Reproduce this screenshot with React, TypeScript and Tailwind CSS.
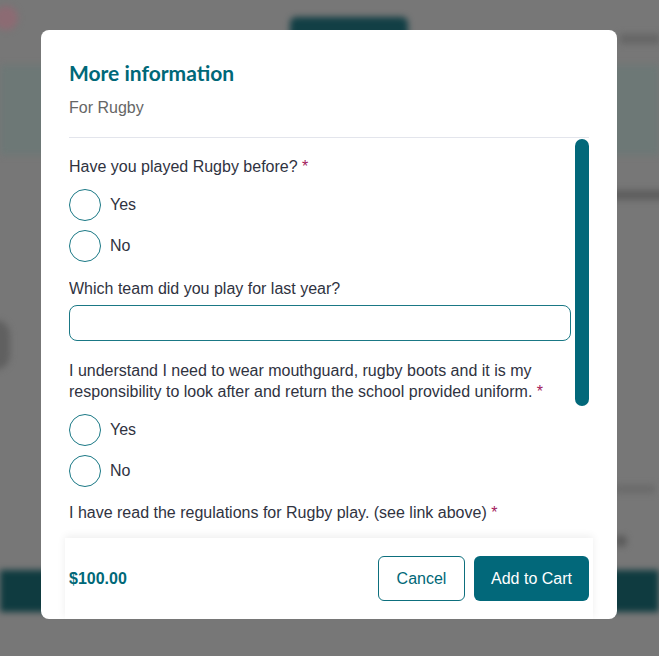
import React from "react";

function Radio({ label }: { label: string }) {
  return (
    <label className="flex items-center gap-[9px] h-8">
      <span className="block w-8 h-8 rounded-full border-[1.5px] border-[#1a7885] bg-white" />
      <span className="text-base text-[#30333f]">{label}</span>
    </label>
  );
}

function Question({ children, required }: { children: React.ReactNode; required?: boolean }) {
  return (
    <p className="text-base leading-6 text-[#30333f]">
      {children}
      {required && <span className="text-[#a3195b]"> *</span>}
    </p>
  );
}

export default function App() {
  return (
    <div
      className="relative w-[659px] h-[656px] overflow-hidden bg-[#777777]"
      style={{ fontFamily: '"Liberation Sans", Arial, sans-serif' }}
    >
      {/* dimmed, blurred page behind the modal */}
      <div className="absolute inset-0 blur-[3px]">
        <div className="relative h-[65px]">
          <div className="absolute left-[-6px] top-[6px] w-[24px] h-[24px] rounded-full bg-[#8c6b73]" />
          <div className="absolute left-[290px] top-[17px] w-[118px] h-[34px] rounded-md bg-[#123f45]" />
          <div className="absolute left-[620px] top-[34px] w-[40px] h-[10px] bg-[#666]" />
        </div>
        <div className="h-[90px] bg-[#6d7876]" />
        <div className="relative h-[415px]">
          <div className="absolute left-[610px] top-[35px] w-[60px] h-[10px] bg-[#5e5e5e]" />
          <div className="absolute left-[-20px] top-[165px] w-[30px] h-[50px] rounded-full bg-[#606060]" />
          <div className="absolute left-[615px] top-[330px] w-[40px] h-[8px] bg-[#6a6a6a]" />
          <div className="absolute left-[615px] top-[380px] w-[12px] h-[12px] rounded-full bg-[#5a5a5a]" />
        </div>
        <div className="h-[42px] bg-[#0f3b40]" />
      </div>

      {/* modal */}
      <div className="absolute left-[41px] top-[30px] w-[576px] h-[589px] rounded-lg bg-white flex flex-col px-7 overflow-hidden">
        <div className="pt-[29px] pb-[17px] border-b border-[#e3e5ec]">
          <h2
            className="text-[21px] leading-7 font-bold text-[#006878]"
            style={{ fontFamily: 'Lato, "Open Sans", sans-serif' }}
          >
            More information
          </h2>
          <p className="mt-[9px] text-base leading-6 text-[#666666]">For Rugby</p>
        </div>

        <div className="relative h-[400px] overflow-hidden">
          <div className="pt-[17px] pr-[18px] flex flex-col">
            <Question required>Have you played Rugby before?</Question>
            <div className="mt-[10px] flex flex-col gap-[9px]">
              <Radio label="Yes" />
              <Radio label="No" />
            </div>
            <div className="mt-[15px]">
              <Question>Which team did you play for last year?</Question>
            </div>
            <input
              type="text"
              className="mt-[4px] h-9 w-full rounded-lg border border-[#1a7885] px-3 outline-none"
            />
            <p className="mt-[19px] text-base leading-[21px] text-[#30333f]">
              I understand I need to wear mouthguard, rugby boots and it is my responsibility to look after and return the school provided uniform.
              <span className="text-[#a3195b]"> *</span>
            </p>
            <div className="mt-[12px] flex flex-col gap-[9px]">
              <Radio label="Yes" />
              <Radio label="No" />
            </div>
            <div className="mt-[14px]">
              <Question required>I have read the regulations for Rugby play. (see link above)</Question>
            </div>
          </div>
          <div className="absolute right-0 top-[1px] w-[14px] h-[267px] rounded-full bg-[#02687a]" />
        </div>

        <div className="relative -mx-1 px-1 h-[81px] flex items-center justify-between bg-white shadow-[0_-2px_8px_rgba(0,0,0,0.07)]">
          <span className="text-base font-bold text-[#006878]">$100.00</span>
          <div className="flex gap-[9px]">
            <button className="h-[45px] w-[87px] rounded-md border border-[#0d6f7d] bg-white text-base text-[#006878]">
              Cancel
            </button>
            <button className="h-[45px] w-[115px] rounded-md bg-[#02687a] text-base text-white">
              Add to Cart
            </button>
          </div>
        </div>
      </div>
    </div>
  );
}
